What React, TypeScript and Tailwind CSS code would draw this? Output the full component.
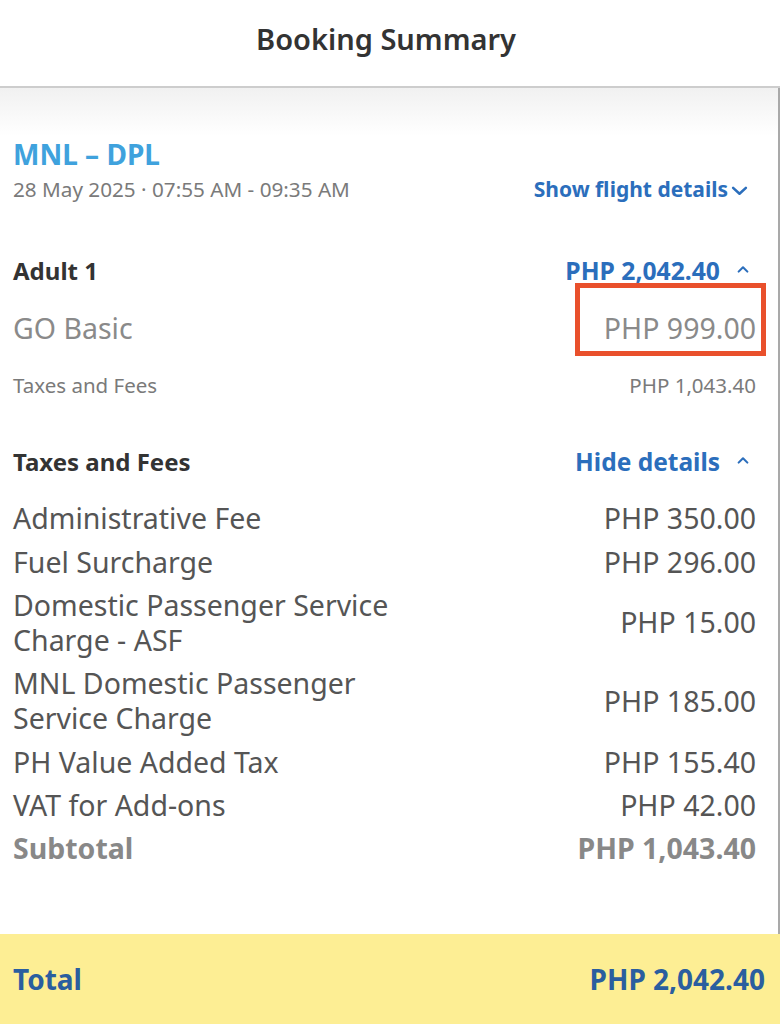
import React from 'react'

const font = { fontFamily: '"Noto Sans", "Open Sans", sans-serif' }

function Chevron({ up = false, className = '' }: { up?: boolean; className?: string }) {
  return (
    <svg viewBox="0 0 16 10" className={className} fill="none" stroke="currentColor" strokeWidth="2.4" strokeLinecap="round" strokeLinejoin="round">
      {up ? <path d="M3 8 L8 3 L13 8" /> : <path d="M2 2.5 L8 8 L14 2.5" />}
    </svg>
  )
}

const fees = [
  { label: ['Administrative Fee'], amount: 'PHP 350.00' },
  { label: ['Fuel Surcharge'], amount: 'PHP 296.00' },
  { label: ['Domestic Passenger Service', 'Charge - ASF'], amount: 'PHP 15.00' },
  { label: ['MNL Domestic Passenger', 'Service Charge'], amount: 'PHP 185.00' },
  { label: ['PH Value Added Tax'], amount: 'PHP 155.40' },
  { label: ['VAT for Add-ons'], amount: 'PHP 42.00' },
]

export default function App() {
  return (
    <div className="w-[780px] h-[1024px] bg-white flex flex-col overflow-hidden" style={font}>
      {/* Header */}
      <div className="h-[88px] shrink-0 flex items-center justify-center border-b-2 border-[#cdcdcd] pr-[8px]">
        <h1 className="text-[29px] font-semibold text-[#333] -mt-[8px]">Booking Summary</h1>
      </div>

      {/* Content */}
      <div className="flex-1 border-r-2 border-[#a9a9a9] bg-[linear-gradient(to_bottom,#f1f1f1,#ffffff_48px)] pl-[13px] pr-[22px] pt-[49px]">
        {/* Flight */}
        <div className="flex items-end justify-between">
          <div>
            <div className="text-[28px] leading-[34px] font-bold text-[#3fa2dd]">MNL – DPL</div>
            <div className="mt-[5px] text-[20.7px] leading-[26px] text-[#7a7a7a]">28 May 2025 · 07:55 AM - 09:35 AM</div>
          </div>
          <div className="flex items-center text-[21px] leading-[26px] font-bold text-[#2b6ebc] mr-[8px]">
            <span>Show flight details</span>
            <Chevron className="w-[17px] h-[11px] ml-[3px] mt-[2px]" />
          </div>
        </div>

        {/* Adult */}
        <div className="mt-[54px] flex items-center justify-between h-[30px]">
          <span className="text-[24px] font-bold text-[#333]">Adult 1</span>
          <div className="flex items-center text-[24.7px] font-bold text-[#2b6ebc]">
            <span>PHP 2,042.40</span>
            <Chevron up className="w-[14px] h-[10px] ml-[16px] mb-[4px] mr-[6px]" />
          </div>
        </div>

        <div className="mt-[24px] flex items-center justify-between h-[36px]">
          <span className="text-[28.5px] text-[#8a8a8a]">GO Basic</span>
          <span className="relative text-[28.5px] text-[#8a8a8a]">
            PHP 999.00
            <span className="absolute -left-[29px] -right-[10px] -top-[24px] -bottom-[7px] border-[5px] border-[#e9502c]" />
          </span>
        </div>

        <div className="mt-[27px] flex items-center justify-between h-[24px] text-[20.5px] text-[#7a7a7a]">
          <span>Taxes and Fees</span>
          <span>PHP 1,043.40</span>
        </div>

        {/* Taxes and Fees */}
        <div className="mt-[50px] flex items-center justify-between h-[30px]">
          <span className="text-[24px] font-bold text-[#333]">Taxes and Fees</span>
          <div className="flex items-center text-[24.5px] font-bold text-[#2b6ebc]">
            <span>Hide details</span>
            <Chevron up className="w-[14px] h-[10px] ml-[16px] mb-[4px] mr-[6px]" />
          </div>
        </div>

        <div className="mt-[20px]">
          {fees.map((fee, i) => (
            <div key={i} className="flex items-center justify-between py-[4.2px] text-[28.5px] leading-[35px] text-[#555]">
              <div>
                {fee.label.map((l, j) => (
                  <div key={j}>{l}</div>
                ))}
              </div>
              <span>{fee.amount}</span>
            </div>
          ))}
          <div className="flex items-center justify-between py-[4.2px] text-[28.5px] leading-[35px] font-bold text-[#888]">
            <span>Subtotal</span>
            <span>PHP 1,043.40</span>
          </div>
        </div>
      </div>

      {/* Total */}
      <div className="h-[90px] shrink-0 bg-[#fdee94] flex items-center justify-between pl-[13px] pr-[15px]">
        <span className="text-[28px] font-bold text-[#2a5e9f]">Total</span>
        <span className="text-[28px] font-bold text-[#2a5e9f]">PHP 2,042.40</span>
      </div>
    </div>
  )
}
